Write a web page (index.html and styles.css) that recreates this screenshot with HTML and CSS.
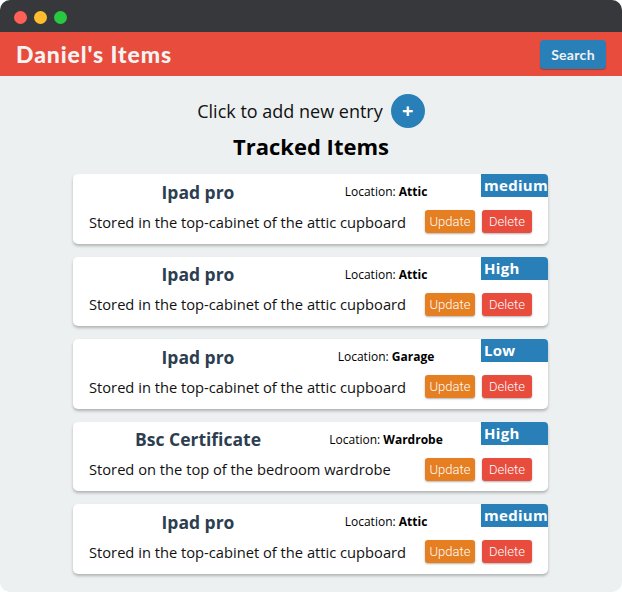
FILE: index.html
```html
<!DOCTYPE html>
<html>
<head>
<meta charset="utf-8">
<link rel="stylesheet" href="styles.css">
</head>
<body>
<div class="window">
  <div class="titlebar">
    <span class="dot red"></span><span class="dot yellow"></span><span class="dot green"></span>
  </div>
  <header class="appbar">
    <h1 class="brand">Daniel's Items</h1>
    <button class="search">Search</button>
  </header>
  <main class="content">
    <div class="add-row">
      <span class="add-text">Click to add new entry</span>
      <span class="add-btn">+</span>
    </div>
    <h2 class="heading">Tracked Items</h2>
    <div class="list">
      <div class="card">
        <div class="top">
          <div class="title">Ipad pro</div>
          <div class="loc">Location: <b>Attic</b></div>
        </div>
        <div class="bottom">
          <div class="desc">Stored in the top-cabinet of the attic cupboard</div>
          <div class="actions"><button class="btn upd">Update</button><button class="btn del">Delete</button></div>
        </div>
        <span class="badge">medium</span>
      </div>
      <div class="card">
        <div class="top">
          <div class="title">Ipad pro</div>
          <div class="loc">Location: <b>Attic</b></div>
        </div>
        <div class="bottom">
          <div class="desc">Stored in the top-cabinet of the attic cupboard</div>
          <div class="actions"><button class="btn upd">Update</button><button class="btn del">Delete</button></div>
        </div>
        <span class="badge">High</span>
      </div>
      <div class="card">
        <div class="top">
          <div class="title">Ipad pro</div>
          <div class="loc">Location: <b>Garage</b></div>
        </div>
        <div class="bottom">
          <div class="desc">Stored in the top-cabinet of the attic cupboard</div>
          <div class="actions"><button class="btn upd">Update</button><button class="btn del">Delete</button></div>
        </div>
        <span class="badge">Low</span>
      </div>
      <div class="card">
        <div class="top">
          <div class="title">Bsc Certificate</div>
          <div class="loc">Location: <b>Wardrobe</b></div>
        </div>
        <div class="bottom">
          <div class="desc">Stored on the top of the bedroom wardrobe</div>
          <div class="actions"><button class="btn upd">Update</button><button class="btn del">Delete</button></div>
        </div>
        <span class="badge">High</span>
      </div>
      <div class="card">
        <div class="top">
          <div class="title">Ipad pro</div>
          <div class="loc">Location: <b>Attic</b></div>
        </div>
        <div class="bottom">
          <div class="desc">Stored in the top-cabinet of the attic cupboard</div>
          <div class="actions"><button class="btn upd">Update</button><button class="btn del">Delete</button></div>
        </div>
        <span class="badge">medium</span>
      </div>
    </div>
  </main>
</div>
</body>
</html>
```

FILE: styles.css
```css
html, body {
  margin: 0;
  padding: 0;
  background: #ffffff;
}
body {
  font-family: "Open Sans", "DejaVu Sans", sans-serif;
}
.window {
  width: 622px;
  height: 592px;
  border-radius: 10px;
  overflow: hidden;
  background: #ecf0f1;
  display: flex;
  flex-direction: column;
}
.titlebar {
  height: 32px;
  background: #37383b;
  display: flex;
  align-items: center;
  padding-left: 14px;
  gap: 7px;
  flex-shrink: 0;
}
.dot {
  width: 13px;
  height: 13px;
  border-radius: 50%;
  display: inline-block;
  margin-top: 2px;
}
.dot.red { background: #fe5f57; }
.dot.yellow { background: #febc2e; }
.dot.green { background: #28c840; }
.appbar {
  height: 44px;
  background: #e74c3c;
  display: flex;
  align-items: center;
  justify-content: space-between;
  padding: 0 16px;
  flex-shrink: 0;
}
.brand {
  margin: 0;
  font-family: Lato, "Open Sans", sans-serif;
  font-weight: 900;
  font-size: 23px;
  color: #f3f3f3;
  letter-spacing: 0.9px;
}
.search {
  background: #2980b9;
  color: #f1f1f1;
  border: none;
  border-radius: 4px;
  height: 29px;
  width: 66px;
  font-family: Lato, sans-serif;
  font-size: 14px;
  font-weight: 700;
  letter-spacing: 0.3px;
  padding: 0;
  box-shadow: 0 1px 1px rgba(0,0,0,0.25);
}
.content {
  display: flex;
  flex-direction: column;
  align-items: center;
  padding-top: 18px;
}
.add-row {
  display: flex;
  align-items: center;
  gap: 8px;
  height: 34px;
}
.add-text {
  font-size: 18px;
  color: #111;
}
.add-btn {
  width: 34px;
  height: 34px;
  border-radius: 50%;
  background: #2980b9;
  color: #fff;
  font-weight: 700;
  font-size: 20px;
  display: flex;
  align-items: center;
  justify-content: center;
  line-height: 1;
}
.heading {
  margin: 3px 0 0 0;
  font-size: 22px;
  font-weight: 700;
  color: #000;
  height: 30px;
  line-height: 30px;
}
.list {
  margin-top: 13px;
  margin-right: 1px;
  display: flex;
  flex-direction: column;
  gap: 13px;
}
.card {
  position: relative;
  width: 475px;
  height: 69.5px;
  box-sizing: border-box;
  background: #fff;
  border-radius: 5px;
  box-shadow: 0 2px 3px rgba(0,0,0,0.25);
  padding: 0 16px;
}
.top {
  height: 35px;
  display: flex;
  align-items: center;
}
.title {
  width: 218px;
  text-align: center;
  font-size: 17.5px;
  font-weight: 700;
  color: #2c3e50;
}
.loc {
  width: 158px;
  text-align: center;
  font-size: 12px;
  color: #000;
}
.loc b { font-weight: 700; }
.bottom {
  height: 25px;
  display: flex;
  align-items: center;
  justify-content: space-between;
}
.desc {
  font-size: 14.7px;
  color: #111;
}
.actions {
  display: flex;
  gap: 7px;
}
.btn {
  width: 50px;
  height: 23px;
  border: none;
  border-radius: 3px;
  color: #fff;
  font-family: Roboto, sans-serif;
  font-weight: 300;
  font-size: 13px;
  padding: 0;
  box-shadow: 0 1px 2px rgba(0,0,0,0.3);
}
.btn.upd { background: #e67e22; }
.btn.del { background: #e74c3c; }
.badge {
  position: absolute;
  top: 0;
  right: 0;
  width: 67px;
  height: 23px;
  box-sizing: border-box;
  padding-left: 3px;
  background: #2980b9;
  color: #fff;
  font-weight: 700;
  font-size: 15px;
  line-height: 23px;
  letter-spacing: 0.3px;
  border-top-right-radius: 4px;
}
```
